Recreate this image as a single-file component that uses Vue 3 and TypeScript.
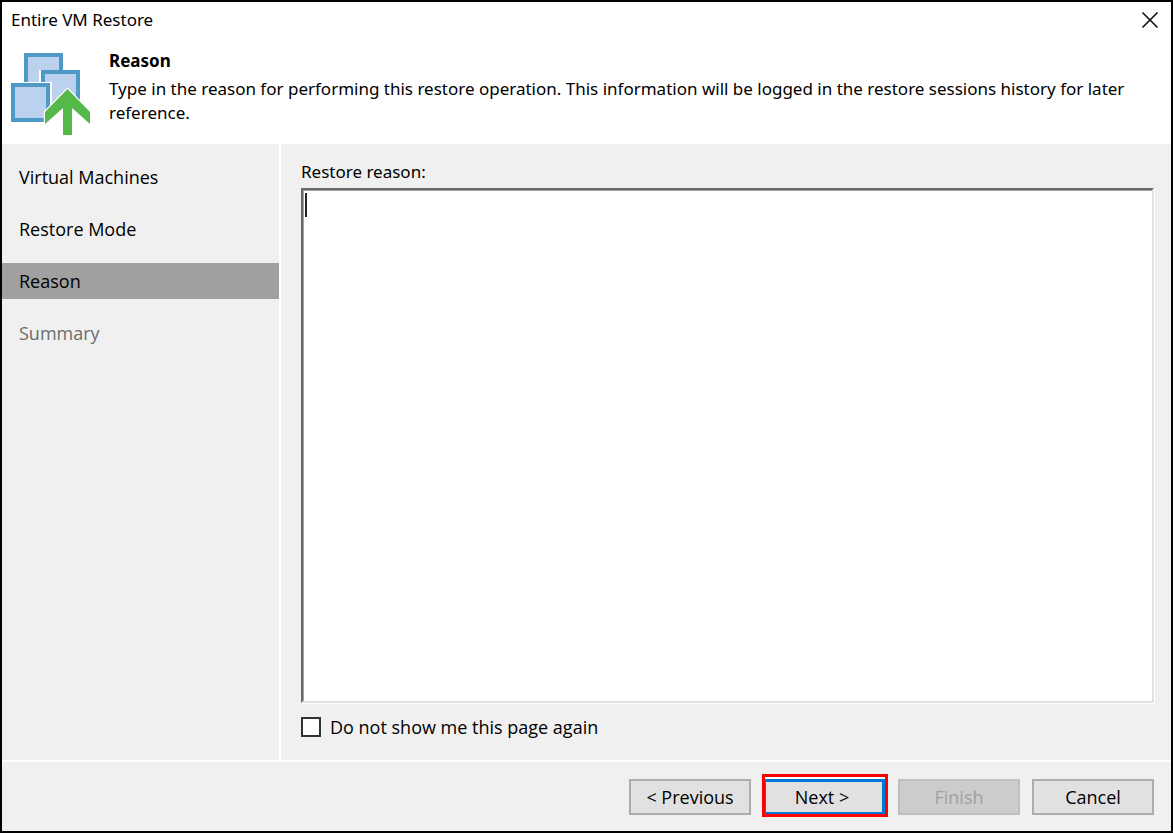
<script setup lang="ts">
import { ref } from 'vue'

interface Step {
  label: string
  state: 'done' | 'current' | 'pending'
}

const steps: Step[] = [
  { label: 'Virtual Machines', state: 'done' },
  { label: 'Restore Mode', state: 'done' },
  { label: 'Reason', state: 'current' },
  { label: 'Summary', state: 'pending' },
]

const reason = ref('')
const skipPage = ref(false)
</script>

<template>
  <main class="dialog">
    <div class="titlebar">
      <span class="title">Entire VM Restore</span>
      <button class="close" type="button" aria-label="Close">
        <svg width="18" height="18" viewBox="0 0 18 18" aria-hidden="true">
          <path d="M1.500 1.500 16.500 16.500M16.500 1.500 1.500 16.500" fill="none" stroke="#111" stroke-width="1.600" />
        </svg>
      </button>
    </div>

    <header class="intro">
      <svg class="logo" width="80" height="84" viewBox="0 0 80 84" aria-hidden="true">
        <g fill="#bad2ed" stroke="#4f99c6" stroke-width="4">
          <rect x="15" y="3" width="35" height="35" />
          <path d="M28 18H71V62H28Z" fill="#fff" stroke="none" />
          <rect x="32" y="20" width="35" height="35" />
          <path d="M0 30H41V71H0Z" fill="#fff" stroke="none" />
          <rect x="2" y="33" width="35" height="35" />
        </g>
        <path
          d="M56.500 37 79 60V72L61 56V83H52V56L34 72V60Z"
          fill="#54b948" stroke="#fff" stroke-width="2.500" paint-order="stroke"
        />
      </svg>
      <div class="intro-text">
        <h1>Reason</h1>
        <p>Type in the reason for performing this restore operation. This information will be logged in the restore sessions history for later reference.</p>
      </div>
    </header>

    <div class="body">
      <nav class="steps" aria-label="Wizard steps">
        <button
          v-for="step in steps"
          :key="step.label"
          type="button"
          class="step"
          :class="step.state"
          :aria-current="step.state === 'current' ? 'step' : undefined"
        >{{ step.label }}</button>
      </nav>

      <section class="page">
        <label class="field-label" for="reason">Restore reason:</label>
        <div class="field">
          <textarea id="reason" v-model="reason"></textarea>
          <span v-if="!reason" class="caret"></span>
        </div>
        <label class="check" for="skip">
          <input id="skip" v-model="skipPage" type="checkbox" />
          <span>Do not show me this page again</span>
        </label>
      </section>
    </div>

    <footer class="actions">
      <button class="btn" type="button">&lt; Previous</button>
      <span class="highlight"><button class="btn primary" type="button">Next &gt;</button></span>
      <button class="btn" type="button" disabled>Finish</button>
      <button class="btn" type="button">Cancel</button>
    </footer>
  </main>
</template>

<style>
body {
  margin: 0;
}
</style>

<style scoped>
.dialog {
  box-sizing: border-box;
  display: flex;
  flex-direction: column;
  min-height: 100vh;
  border: 2px solid #000;
  background: #f0f0f0;
  color: #000;
  font-family: "Open Sans", "Noto Sans", sans-serif;
  font-size: 18px;
  line-height: 24px;
}

.title,
.intro-text,
.field-label {
  font-family: "Noto Sans", "Open Sans", sans-serif;
  font-size: 17px;
}

button,
textarea {
  font: inherit;
  color: inherit;
}

.titlebar {
  display: flex;
  align-items: center;
  justify-content: space-between;
  height: 36px;
  padding: 0 12px 0 9px;
  background: #fff;
}

.close {
  display: flex;
  padding: 0;
  border: 0;
  background: none;
}

.intro {
  display: flex;
  align-items: flex-end;
  gap: 18px;
  min-height: 87px;
  padding: 11px 24px 8px 9px;
  background: #fff;
}

.logo {
  flex: none;
}

.intro-text {
  align-self: flex-start;
}

h1,
p {
  margin: 0;
  font-size: inherit;
}

h1 {
  margin-bottom: 4px;
  font-weight: 700;
}

.body {
  flex: 1;
  display: flex;
}

.steps {
  box-sizing: border-box;
  flex: none;
  display: flex;
  flex-direction: column;
  gap: 16px;
  width: 279px;
  padding-top: 15px;
  border-right: 2px solid #fff;
}

.step {
  height: 36px;
  padding: 0 17px;
  border: 0;
  background: none;
  text-align: left;
}

.current {
  background: #a0a0a0;
}

.pending {
  color: #6d6d6d;
}

.page {
  flex: 1;
  display: flex;
  flex-direction: column;
  min-width: 0;
  padding: 16px 17px 21px 20px;
}

.field-label {
  margin-bottom: 4px;
}

.field {
  flex: 1;
  display: flex;
  position: relative;
}

textarea {
  box-sizing: border-box;
  flex: 1;
  min-width: 0;
  padding: 2px;
  border: 2px solid;
  border-color: #696969 #e3e3e3 #e3e3e3 #696969;
  box-shadow: 1px 1px 0 #fff, inset 1px 1px 0 #a0a0a0;
  outline: 0;
  background: #fff;
  resize: none;
}

.caret {
  position: absolute;
  top: 5px;
  left: 4px;
  width: 2px;
  height: 24px;
  background: #222;
  pointer-events: none;
}

textarea:focus + .caret {
  display: none;
}

.check {
  display: flex;
  align-items: center;
  align-self: flex-start;
  gap: 9px;
  margin-top: 12px;
}

.check input {
  appearance: none;
  box-sizing: border-box;
  width: 20px;
  height: 20px;
  margin: 0;
  border: 2px solid #333;
  background: #fff;
}

.check input:checked {
  background: #333;
  box-shadow: inset 0 0 0 3px #fff;
}

.actions {
  display: flex;
  align-items: center;
  justify-content: flex-end;
  gap: 12px;
  padding: 17px 17px 16px;
  border-top: 2px solid #fff;
}

.btn {
  box-sizing: border-box;
  width: 122px;
  height: 36px;
  padding: 0;
  border: 2px solid #adadad;
  background: #e1e1e1;
}

.btn:disabled {
  border-color: #bfbfbf;
  background: #ccc;
  color: #a0a0a0;
}

.highlight {
  display: flex;
  margin: -5px -2px -2px -1px;
  padding-top: 2px;
  border: 3px solid #f00;
  background: #fff;
}

.primary {
  width: 120px;
  height: 35px;
  padding-right: 4px;
  border: solid #0078d7;
  border-width: 3px 3px 2px 1px;
}
</style>
